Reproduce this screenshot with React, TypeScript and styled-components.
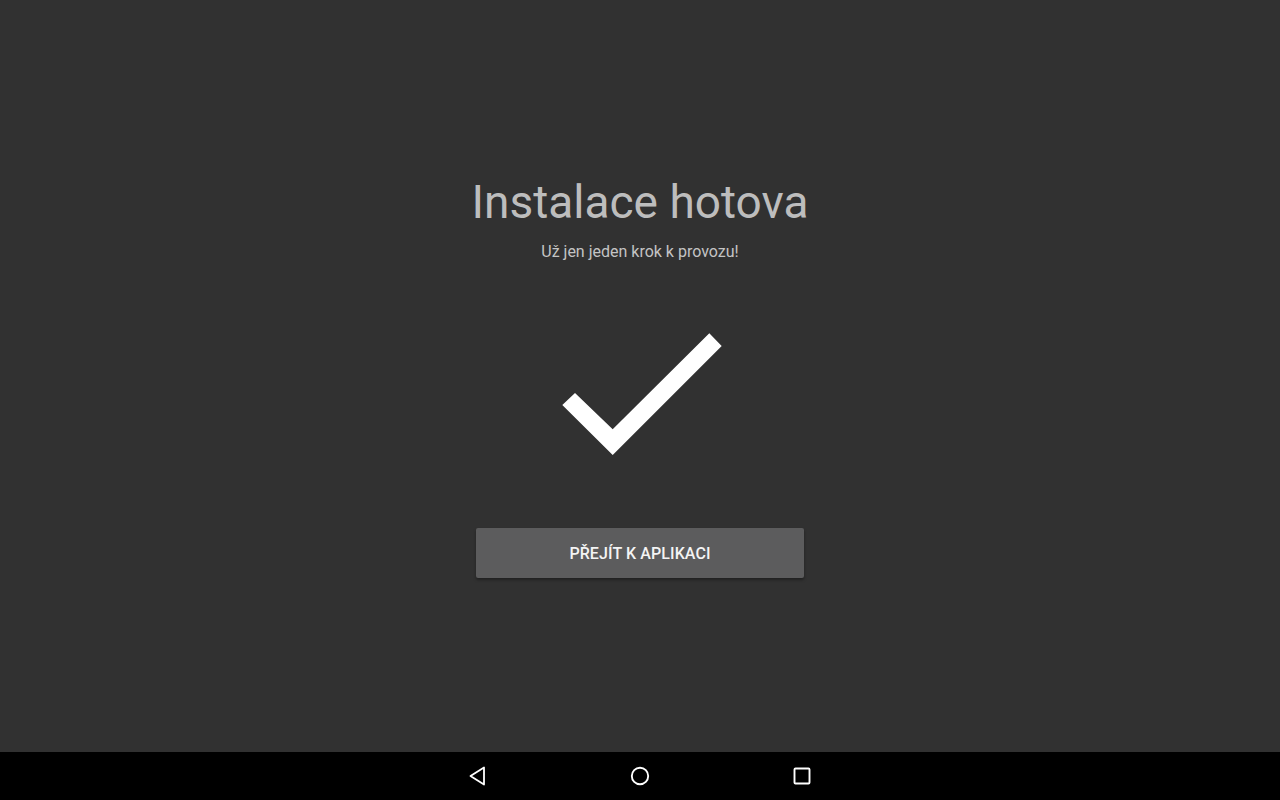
import React from "react";
import styled, { createGlobalStyle } from "styled-components";

const GlobalStyle = createGlobalStyle`
  html, body {
    margin: 0;
    padding: 0;
    background: #313131;
  }
  body {
    font-family: Roboto, "Noto Sans", "Liberation Sans", sans-serif;
  }
`;

const Screen = styled.div`
  width: 1280px;
  height: 800px;
  display: flex;
  flex-direction: column;
  background: #313131;
  overflow: hidden;
`;

const Content = styled.main`
  flex: 1;
  display: flex;
  flex-direction: column;
  align-items: center;
  padding-top: 174px;
`;

const Title = styled.h1`
  margin: 0;
  font-size: 46px;
  line-height: 56px;
  font-weight: 400;
  color: #bdbdbd;
`;

const Subtitle = styled.p`
  margin: 12px 0 0;
  font-size: 16px;
  line-height: 20px;
  color: #c4c4c4;
`;

const CheckWrap = styled.div`
  margin-top: 66px;
  width: 176px;
  height: 132px;
  display: flex;
`;

const PrimaryButton = styled.button`
  margin-top: 68px;
  width: 328px;
  height: 50px;
  border: none;
  border-radius: 2px;
  background: #5c5c5d;
  color: #f4f4f4;
  font-family: Roboto, "Noto Sans", "Liberation Sans", sans-serif;
  font-size: 16px;
  font-weight: 500;
  letter-spacing: 0.1px;
  box-shadow: 0 2px 3px rgba(0, 0, 0, 0.35);
  cursor: pointer;
`;

const NavBar = styled.nav`
  height: 48px;
  background: #000;
  display: flex;
  justify-content: center;
  align-items: center;
  gap: 122px;
`;

const NavButton = styled.div`
  width: 40px;
  height: 48px;
  display: flex;
  align-items: center;
  justify-content: center;
`;

const CheckMark = () => (
  <svg width="176" height="132" viewBox="552 328 176 132">
    <polygon
      points="562.3,405 575,393 612.7,429.3 709.3,333.3 721.7,346 612.7,455"
      fill="#ffffff"
    />
  </svg>
);

export default function App() {
  return (
    <>
      <GlobalStyle />
      <Screen>
        <Content>
          <Title>Instalace hotova</Title>
          <Subtitle>Už jen jeden krok k provozu!</Subtitle>
          <CheckWrap>
            <CheckMark />
          </CheckWrap>
          <PrimaryButton>PŘEJÍT K APLIKACI</PrimaryButton>
        </Content>
        <NavBar>
          <NavButton>
            <svg width="20" height="20" viewBox="0 0 20 20">
              <path
                d="M16 1.5 L16 18.5 L2.5 10 Z"
                fill="none"
                stroke="#fff"
                strokeWidth="1.8"
                strokeLinejoin="round"
              />
            </svg>
          </NavButton>
          <NavButton>
            <svg width="20" height="20" viewBox="0 0 20 20">
              <circle cx="10" cy="10" r="8.2" fill="none" stroke="#fff" strokeWidth="1.9" />
            </svg>
          </NavButton>
          <NavButton>
            <svg width="20" height="20" viewBox="0 0 20 20">
              <rect x="2.5" y="2.5" width="15" height="15" rx="1" fill="none" stroke="#fff" strokeWidth="1.9" />
            </svg>
          </NavButton>
        </NavBar>
      </Screen>
    </>
  );
}
